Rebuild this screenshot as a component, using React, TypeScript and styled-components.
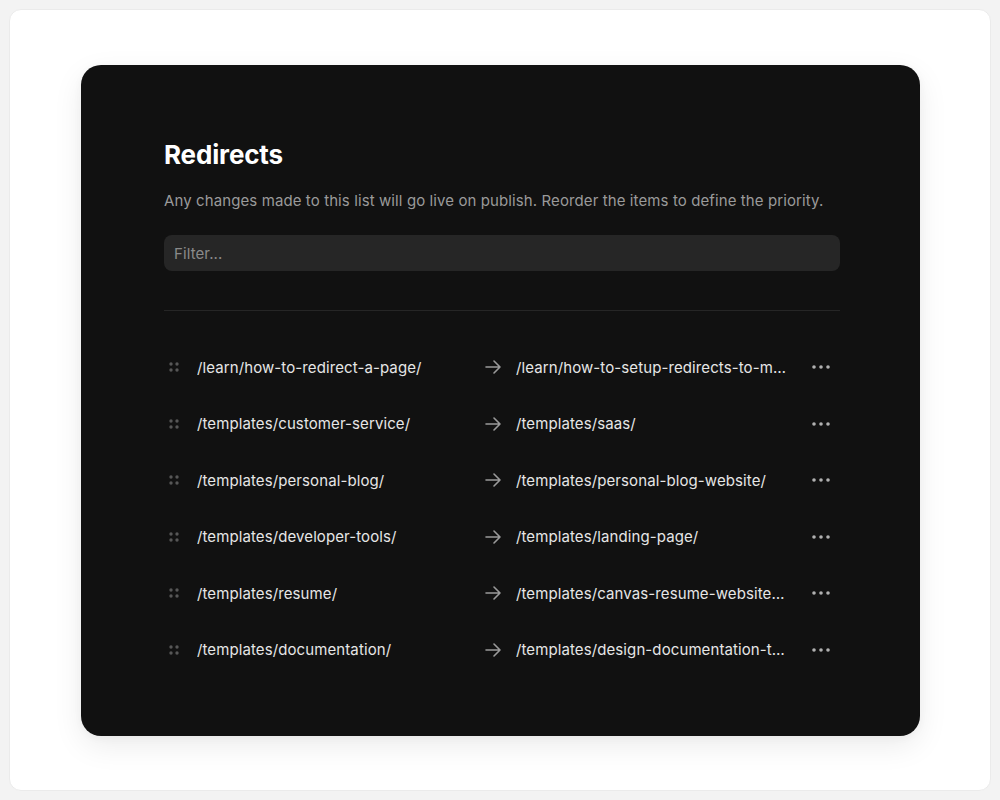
import styled, { createGlobalStyle } from 'styled-components';

const GlobalStyle = createGlobalStyle`
	html, body {
		margin: 0;
		padding: 0;
		background: #f3f3f3;
	}
	body {
		font-family: Inter, "Noto Sans", sans-serif;
		-webkit-font-smoothing: antialiased;
	}
`;

const Page = styled.div`
	width: 1000px;
	height: 800px;
	box-sizing: border-box;
	padding: 9px;
`;

const Frame = styled.div`
	height: 100%;
	box-sizing: border-box;
	background: #ffffff;
	border: 1px solid #ebebeb;
	border-radius: 12px;
	padding: 55px 70px 54px 71px;
`;

const Card = styled.div`
	height: 100%;
	box-sizing: border-box;
	background: #111111;
	border-radius: 20px;
	box-shadow: 0 10px 30px rgba(0, 0, 0, 0.08), 0 2px 8px rgba(0, 0, 0, 0.04);
	padding: 74px 80px 0 83px;
`;

const Title = styled.h1`
	margin: 0;
	font-size: 26px;
	line-height: 32px;
	font-weight: 700;
	letter-spacing: -0.15px;
	color: #ffffff;
`;

const Description = styled.p`
	margin: 19px 0 0;
	font-size: 15px;
	line-height: 22px;
	letter-spacing: 0.1px;
	color: #9a9a9a;
`;

const Filter = styled.input`
	display: block;
	width: 100%;
	box-sizing: border-box;
	margin-top: 23px;
	height: 36px;
	border: none;
	outline: none;
	border-radius: 8px;
	background: #262626;
	padding: 0 10px;
	font-family: inherit;
	font-size: 15px;
	letter-spacing: 0.1px;
	color: #fff;

	&::placeholder {
		color: #8a8a8a;
	}
`;

const Divider = styled.hr`
	margin: 39px 0 0;
	border: none;
	border-top: 1px solid #262626;
`;

const List = styled.div`
	margin-top: 28px;
	display: flex;
	flex-direction: column;
`;

const Row = styled.div`
	display: grid;
	grid-template-columns: 33px 287px 32px 1fr 50px;
	align-items: center;
	height: 56.5px;
`;

const Handle = styled.span`
	display: flex;
	padding-left: 5px;
	color: #575757;
`;

const Path = styled.span`
	font-size: 15px;
	letter-spacing: 0.1px;
	color: #e6e6e6;
	white-space: nowrap;
	overflow: hidden;
	text-overflow: ellipsis;
`;

const Arrow = styled.span`
	display: flex;
	padding-left: 1px;
	color: #9a9a9a;
`;

const More = styled.span`
	display: flex;
	justify-content: flex-end;
	padding-right: 10px;
	color: #b0b0b0;
`;

const redirects = [
	['/learn/how-to-redirect-a-page/', '/learn/how-to-setup-redirects-to-multiple-pages/'],
	['/templates/customer-service/', '/templates/saas/'],
	['/templates/personal-blog/', '/templates/personal-blog-website/'],
	['/templates/developer-tools/', '/templates/landing-page/'],
	['/templates/resume/', '/templates/canvas-resume-website-template/'],
	['/templates/documentation/', '/templates/design-documentation-template/'],
];

function GripIcon() {
	return <svg width="10" height="10" viewBox="0 0 10 10" fill="currentColor">
		<circle cx="2" cy="2" r="1.7" />
		<circle cx="8" cy="2" r="1.7" />
		<circle cx="2" cy="8" r="1.7" />
		<circle cx="8" cy="8" r="1.7" />
	</svg>;
}

function ArrowIcon() {
	return <svg width="16" height="14" viewBox="0 0 16 14" fill="none" stroke="currentColor" strokeWidth="1.6" strokeLinecap="round" strokeLinejoin="round">
		<path d="M1 7h14M9 1l6 6-6 6" />
	</svg>;
}

function DotsIcon() {
	return <svg width="18" height="4" viewBox="0 0 18 4" fill="currentColor">
		<circle cx="2" cy="2" r="1.8" />
		<circle cx="9" cy="2" r="1.8" />
		<circle cx="16" cy="2" r="1.8" />
	</svg>;
}

export default function App() {
	return <Page>
		<GlobalStyle />
		<Frame>
			<Card>
				<Title>Redirects</Title>
				<Description>Any changes made to this list will go live on publish. Reorder the items to define the priority.</Description>
				<Filter placeholder="Filter..." />
				<Divider />
				<List>
					{redirects.map(([from, to]) => {
						return <Row key={from}>
							<Handle><GripIcon /></Handle>
							<Path>{from}</Path>
							<Arrow><ArrowIcon /></Arrow>
							<Path title={to}>{to}</Path>
							<More><DotsIcon /></More>
						</Row>;
					})}
				</List>
			</Card>
		</Frame>
	</Page>;
}
